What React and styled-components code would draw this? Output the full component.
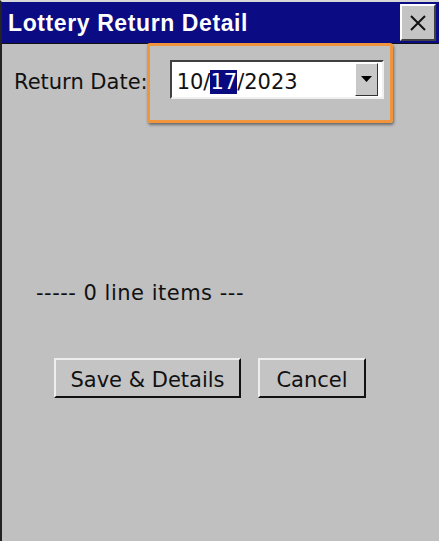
import React from "react";
import styled, { createGlobalStyle } from "styled-components";

const Global = createGlobalStyle`
  html, body {
    margin: 0;
    padding: 0;
    background: #c0c0c0;
  }
  #root {
    width: 439px;
    height: 541px;
  }
`;

const Window = styled.div`
  position: relative;
  box-sizing: border-box;
  width: 439px;
  height: 541px;
  background: #c0c0c0;
  border-left: 2px solid #222;
  border-top: 2px solid #d8d8d8;
  display: flex;
  flex-direction: column;
  font-family: "DejaVu Sans", Verdana, sans-serif;
  color: #111;
  overflow: hidden;
`;

const TitleBar = styled.div`
  box-sizing: border-box;
  height: 42px;
  background: #0b0b84;
  border-bottom: 1px solid #111;
  display: flex;
  align-items: center;
  justify-content: space-between;
  padding: 0 3px 0 6px;
`;

const Title = styled.div`
  color: #fff;
  font-family: "Liberation Sans", Arial, sans-serif;
  font-weight: bold;
  font-size: 23px;
  letter-spacing: 0.6px;
  margin-top: 2px;
`;

const CloseButton = styled.div`
  box-sizing: border-box;
  width: 36px;
  height: 37px;
  background: #c4c4c4;
  border: 2px solid;
  border-color: #fff #404040 #404040 #fff;
  display: flex;
  align-items: center;
  justify-content: center;
`;

const Body = styled.div`
  flex: 1;
  display: flex;
  flex-direction: column;
  padding: 16px 0 0 12px;
`;

const Row = styled.div`
  display: flex;
  align-items: center;
  gap: 22px;
`;

const Label = styled.span`
  font-size: 21px;
  padding-top: 4px;
`;

const DateBox = styled.div`
  box-sizing: border-box;
  width: 214px;
  height: 39px;
  background: #fff;
  border: 2px solid;
  border-color: #404040 #f0f0f0 #f0f0f0 #404040;
  display: flex;
  align-items: center;
  justify-content: space-between;
  padding: 0 4px 0 5px;
  font-size: 21px;
`;

const DateText = styled.span`
  padding-top: 4px;
`;

const Selected = styled.span`
  background: #0a0a80;
  color: #fff;
`;

const DropButton = styled.div`
  box-sizing: border-box;
  width: 23px;
  height: 33px;
  background: #c8c8c8;
  border: 1px solid;
  border-color: #fff #333 #333 #fff;
  display: flex;
  align-items: center;
  justify-content: center;
`;

const Highlight = styled.div`
  position: absolute;
  left: 145px;
  top: 41px;
  width: 246px;
  height: 80px;
  box-sizing: border-box;
  border: 3px solid #f0953c;
  border-radius: 3px;
  box-shadow: 1px 2px 3px rgba(0, 0, 0, 0.45);
  pointer-events: none;
`;

const Summary = styled.div`
  font-size: 21px;
  letter-spacing: 0.5px;
  margin: 182px 0 0 22px;
`;

const Buttons = styled.div`
  display: flex;
  gap: 17px;
  margin: 53px 0 0 40px;
`;

const Button = styled.div`
  box-sizing: border-box;
  height: 40px;
  width: ${(p) => p.$w}px;
  padding-top: 3px;
  background: #c4c4c4;
  border: 2px solid;
  border-color: #eee #111 #111 #eee;
  display: flex;
  align-items: center;
  justify-content: center;
  font-size: 21px;
`;

export default function App() {
  return (
    <>
      <Global />
      <Window>
        <TitleBar>
          <Title>Lottery Return Detail</Title>
          <CloseButton>
            <svg width="18" height="18" viewBox="0 0 18 18">
              <path d="M2 2 L16 16 M16 2 L2 16" stroke="#111" strokeWidth="2" />
            </svg>
          </CloseButton>
        </TitleBar>
        <Body>
          <Row>
            <Label>Return Date:</Label>
            <DateBox>
              <DateText>
                10/<Selected>17</Selected>/2023
              </DateText>
              <DropButton>
                <svg width="11" height="7" viewBox="0 0 11 7">
                  <path d="M0 0 H11 L5.5 6 Z" fill="#000" />
                </svg>
              </DropButton>
            </DateBox>
          </Row>
          <Summary>----- 0 line items ---</Summary>
          <Buttons>
            <Button $w={187}>Save &amp; Details</Button>
            <Button $w={108}>Cancel</Button>
          </Buttons>
        </Body>
        <Highlight />
      </Window>
    </>
  );
}
